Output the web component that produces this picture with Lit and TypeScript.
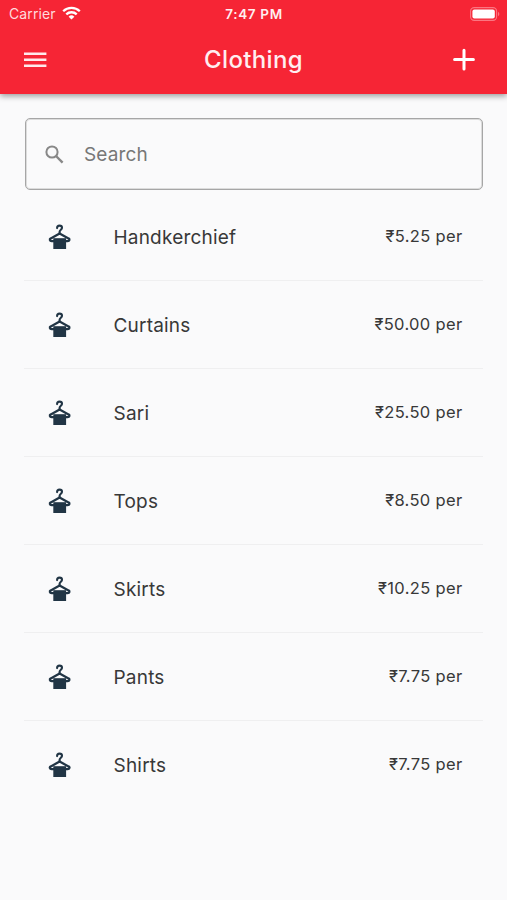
import { LitElement, html, css } from "lit";
import { customElement } from "lit/decorators.js";

interface Item {
  name: string;
  price: string;
}

const ITEMS: Item[] = [
  { name: "Handkerchief", price: "₹5.25 per" },
  { name: "Curtains", price: "₹50.00 per" },
  { name: "Sari", price: "₹25.50 per" },
  { name: "Tops", price: "₹8.50 per" },
  { name: "Skirts", price: "₹10.25 per" },
  { name: "Pants", price: "₹7.75 per" },
  { name: "Shirts", price: "₹7.75 per" },
];

const hanger = html`<svg width="24" height="26" viewBox="0 0 24 26" fill="none">
  <path
    d="M9.1 4.1C9.1 2.5 10.1 1.6 11.5 1.6c1.5 0 2.5 1 2.5 2.2 0 1.9-2.4 1.9-2.4 4v1.4"
    stroke="#213545" stroke-width="2.1" stroke-linecap="round" />
  <path
    d="M6 17.1H3.6c-1.9 0-2.4-1.9-.8-2.7L11.6 9.6l8.9 4.8c1.6.8 1.1 2.7-.8 2.7H17.5"
    stroke="#213545" stroke-width="2.3" stroke-linejoin="round" />
  <path d="M5.3 14.2h12.8V25H5.3z" fill="#213545" />
</svg>`;

@customElement("app-root")
export class AppRoot extends LitElement {
  static styles = css`
    :host {
      display: flex;
      flex-direction: column;
      height: 900px;
      background: #fafafb;
      color: #383838;
      font-family: Inter, "Noto Sans", sans-serif;
      overflow: hidden;
    }
    svg {
      display: block;
      flex: none;
    }
    header {
      box-sizing: border-box;
      height: 94px;
      flex: none;
      background: #f62535;
      color: #ffeef0;
      box-shadow: 0 2px 6px rgba(0, 0, 0, 0.4);
    }
    .status,
    .bar {
      display: grid;
      grid-template-columns: 1fr auto 1fr;
      align-items: center;
    }
    .status {
      height: 27px;
      padding: 0 8px 0 9px;
      font-size: 14px;
    }
    .carrier {
      display: flex;
      align-items: center;
      gap: 6px;
      color: #ffdadd;
      letter-spacing: 0.1px;
    }
    .carrier svg {
      margin-top: -2px;
    }
    .time {
      font-weight: 600;
      font-size: 13.5px;
      letter-spacing: 0.65px;
    }
    .end {
      justify-self: end;
    }
    .status .end {
      margin-right: -1px;
    }
    .bar {
      height: 65px;
      padding: 0 23px;
    }
    .bar .end {
      margin-right: 8px;
    }
    .title {
      margin: 0;
      font-size: 24px;
      font-weight: 500;
      letter-spacing: 0.35px;
    }
    .search {
      box-sizing: border-box;
      display: flex;
      align-items: center;
      gap: 20px;
      height: 72px;
      margin: 24px 24px 0 25px;
      padding: 0 19px;
      border: 1px solid #a6a6a6;
      box-shadow: inset 0 0 0 1px #dcdcdc;
      border-radius: 5px;
      color: #777;
      font-size: 19px;
      letter-spacing: 0.15px;
      flex: none;
    }
    ul {
      margin: 3px 24px 0;
      padding: 0;
      list-style: none;
    }
    li {
      box-sizing: border-box;
      display: flex;
      align-items: center;
      height: 88px;
      padding: 0 20.5px 0 24px;
      border-bottom: 1px solid #efeff0;
    }
    li:last-child {
      border-bottom-color: transparent;
    }
    .name {
      flex: 1;
      margin-left: 41.5px;
      padding-top: 1px;
      font-size: 19px;
      letter-spacing: 0.2px;
    }
    .price {
      font-size: 16.5px;
      letter-spacing: 0.34px;
      padding-bottom: 1px;
    }
  `;

  render() {
    return html`
      <header>
        <div class="status">
          <span class="carrier">
            Carrier
            <svg width="19" height="14" viewBox="0 0 19 14" fill="none" stroke="#fff" stroke-width="2.3">
              <path d="M1.2 5.2a11.8 11.8 0 0 1 16.6 0" />
              <path d="M4.3 8.4a7.4 7.4 0 0 1 10.4 0" />
              <path d="M9.5 13.6 6.6 10.7a4.1 4.1 0 0 1 5.8 0z" fill="#fff" stroke="none" />
            </svg>
          </span>
          <span class="time">7:47 PM</span>
          <svg class="end" width="30" height="14" viewBox="0 0 30 14">
            <rect x=".6" y=".6" width="26" height="12.8" rx="3.6" fill="none" stroke="#fb7681" stroke-width="1.1" />
            <rect x="2.4" y="2.4" width="22.4" height="9.2" rx="2" fill="#fff" />
            <path d="M28 4.8c1.8.7 1.8 3.7 0 4.4z" fill="#fb7681" />
          </svg>
        </div>
        <div class="bar">
          <svg width="24" height="18" viewBox="0 0 24 18" fill="#ffe9eb">
            <path d="M1 1.4h22.4v2.7H1zM1 7.4h22.4v2.7H1zM1 13.4h22.4v2.7H1z" />
          </svg>
          <h1 class="title">Clothing</h1>
          <svg class="end" width="24" height="24" viewBox="0 0 24 24" stroke="#fff" stroke-width="3" stroke-linecap="round">
            <path d="M12 2.2v18.8M2.6 11.6h18.8" />
          </svg>
        </div>
      </header>
      <div class="search">
        <svg width="19" height="19" viewBox="0 0 19 19" fill="none" stroke="#888" stroke-width="2">
          <circle cx="7" cy="7" r="5.6" />
          <path d="M11 11l6.6 6.6" stroke-width="2.4" />
        </svg>
        <span>Search</span>
      </div>
      <ul>
        ${ITEMS.map(
          (item) => html`<li>
            ${hanger}
            <span class="name">${item.name}</span>
            <span class="price">${item.price}</span>
          </li>`
        )}
      </ul>
    `;
  }
}
